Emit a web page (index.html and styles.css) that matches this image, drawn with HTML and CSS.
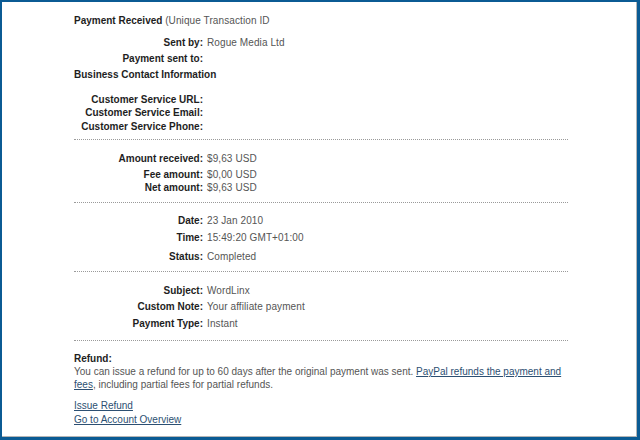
FILE: index.html
```html
<!DOCTYPE html>
<html>
<head>
<meta charset="utf-8">
<link rel="stylesheet" href="styles.css">
</head>
<body>
<div class="frame">
  <div class="inner">
    <div class="title"><b>Payment Received</b> <span class="val">(Unique Transaction ID</span></div>

    <div class="row r-sent"><span class="lbl">Sent by:</span><span class="val">Rogue Media Ltd</span></div>
    <div class="row m3"><span class="lbl">Payment sent to:</span><span class="val"></span></div>
    <div class="heading m3">Business Contact Information</div>
    <div class="row m12"><span class="lbl">Customer Service URL:</span><span class="val"></span></div>
    <div class="row"><span class="lbl">Customer Service Email:</span><span class="val"></span></div>
    <div class="row m1"><span class="lbl">Customer Service Phone:</span><span class="val"></span></div>
    <div class="sep s1"></div>

    <div class="row first"><span class="lbl">Amount received:</span><span class="val">$9,63 USD</span></div>
    <div class="row m3"><span class="lbl">Fee amount:</span><span class="val">$0,00 USD</span></div>
    <div class="row"><span class="lbl">Net amount:</span><span class="val">$9,63 USD</span></div>
    <div class="sep s2"></div>

    <div class="row first2"><span class="lbl">Date:</span><span class="val">23 Jan 2010</span></div>
    <div class="row m4"><span class="lbl">Time:</span><span class="val">15:49:20 GMT+01:00</span></div>
    <div class="row m6"><span class="lbl">Status:</span><span class="val">Completed</span></div>
    <div class="sep s2"></div>

    <div class="row first"><span class="lbl">Subject:</span><span class="val">WordLinx</span></div>
    <div class="row m3"><span class="lbl">Custom Note:</span><span class="val">Your affiliate payment</span></div>
    <div class="row m4"><span class="lbl">Payment Type:</span><span class="val">Instant</span></div>
    <div class="sep s3"></div>

    <div class="refund">
      <div class="heading">Refund:</div>
      <p class="text">You can issue a refund for up to 60 days after the original payment was sent. <a href="#">PayPal refunds the payment and fees</a>, including partial fees for partial refunds.</p>
    </div>
    <div class="links">
      <a href="#">Issue Refund</a>
      <a href="#">Go to Account Overview</a>
    </div>
  </div>
</div>
</body>
</html>
```

FILE: styles.css
```css
html, body {
  margin: 0;
  padding: 0;
  background: #0b5b94;
}
.frame {
  width: 640px;
  height: 440px;
  box-sizing: border-box;
  border-style: solid;
  border-color: #0b5b94;
  border-width: 2px 3px 3px 2px;
  background: #fff;
}
.inner {
  height: 100%;
  box-sizing: border-box;
  border-right: 1px solid #b5b5b5;
  border-bottom: 1px solid #b5b5b5;
  padding: 12px 0 0 72px;
  font-family: "Liberation Sans", Arial, sans-serif;
  font-size: 10px;
  line-height: 13px;
  color: #1e1e1e;
}
.title b { font-weight: bold; }
.val {
  color: #555;
  font-weight: normal;
  letter-spacing: 0.1px;
}
.row {
  display: grid;
  grid-template-columns: 129px 1fr;
  column-gap: 4px;
  height: 13px;
}
.lbl {
  text-align: right;
  font-weight: bold;
  white-space: nowrap;
}
.heading { font-weight: bold; }
.r-sent { margin-top: 9px; }
.m1 { margin-top: 1px; }
.m3 { margin-top: 3px; }
.m4 { margin-top: 4px; }
.m6 { margin-top: 6px; }
.m12 { margin-top: 12px; }
.first { margin-top: 12px; }
.first2 { margin-top: 11px; }
.sep {
  width: 494px;
  border-top: 1px dotted #9a9a9a;
}
.s1 { margin-top: 6px; }
.s2 { margin-top: 8px; }
.s3 { margin-top: 10px; }
.refund { margin-top: 11px; }
.text {
  margin: 0;
  width: 496px;
  color: #555;
}
a {
  color: #2c4f72;
  text-decoration: underline;
}
.links {
  margin-top: 8px;
  display: flex;
  flex-direction: column;
  align-items: flex-start;
  row-gap: 1px;
}
```
